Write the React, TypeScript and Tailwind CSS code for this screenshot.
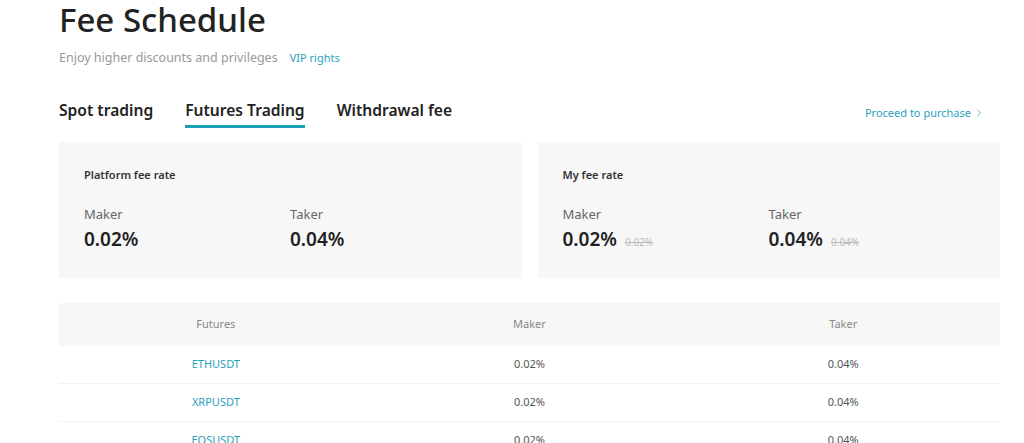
import { ChevronRight } from 'lucide-react';

const rows = [
  { symbol: 'ETHUSDT', maker: '0.02%', taker: '0.04%' },
  { symbol: 'XRPUSDT', maker: '0.02%', taker: '0.04%' },
  { symbol: 'EOSUSDT', maker: '0.02%', taker: '0.04%' },
];

function RateCard({ title, old }: { title: string; old?: boolean }) {
  return (
    <div className="bg-[#f7f7f7] h-[136px] pl-[25px] pt-[26px]">
      <div className="text-[11px] font-semibold text-[#333] leading-[14px]">{title}</div>
      <div className="grid grid-cols-[206px_1fr] mt-[23px]">
        <div>
          <div className="text-[13px] text-[#666] leading-[18px]">Maker</div>
          <div className="flex items-baseline gap-2 mt-[5px]">
            <span className="text-[19px] font-semibold text-[#222] leading-[22px]">0.02%</span>
            {old && <span className="text-[10px] text-[#bbb] line-through">0.02%</span>}
          </div>
        </div>
        <div>
          <div className="text-[13px] text-[#666] leading-[18px]">Taker</div>
          <div className="flex items-baseline gap-2 mt-[5px]">
            <span className="text-[19px] font-semibold text-[#222] leading-[22px]">0.04%</span>
            {old && <span className="text-[10px] text-[#bbb] line-through">0.04%</span>}
          </div>
        </div>
      </div>
    </div>
  );
}

export default function App() {
  return (
    <div className="w-[1024px] h-[443px] overflow-hidden bg-white font-['Noto_Sans',sans-serif]">
      <div className="ml-[59px] w-[941px]">
        <h1 className="text-[33px] font-medium text-[#222] leading-[40px]">Fee Schedule</h1>
        <div className="flex items-center mt-[9px]">
          <span className="text-[12.5px] text-[#999]">Enjoy higher discounts and privileges</span>
          <span className="text-[11px] text-[#2a9fbd] ml-[12px]">VIP rights</span>
        </div>

        <div className="flex items-end justify-between mt-[31px]">
          <div className="flex gap-[32px]">
            <div className="text-[15.6px] font-semibold text-[#222] pb-[6px]">Spot trading</div>
            <div className="text-[15.6px] font-semibold text-[#222] pb-[3px] border-b-[3px] border-[#1e9fb8]">
              Futures Trading
            </div>
            <div className="text-[15.6px] font-semibold text-[#222] pb-[6px]">Withdrawal fee</div>
          </div>
          <div className="flex items-center text-[11px] text-[#2a9fbd] mr-[15px] pb-[7px]">
            Proceed to purchase
            <ChevronRight className="w-3 h-3 ml-[2px]" strokeWidth={1.5} />
          </div>
        </div>

        <div className="grid grid-cols-2 gap-4 mt-[14px]">
          <RateCard title="Platform fee rate" />
          <RateCard title="My fee rate" old />
        </div>

        <div className="mt-[25px]">
          <div className="grid grid-cols-3 bg-[#f7f7f7] h-[43px] items-center text-center text-[11px] text-[#888]">
            <div>Futures</div>
            <div>Maker</div>
            <div>Taker</div>
          </div>
          {rows.map((r) => (
            <div
              key={r.symbol}
              className="grid grid-cols-3 h-[38px] items-center text-center text-[11px] text-[#555] border-b border-[#f2f2f2]"
            >
              <div className="text-[#2a9fbd]">{r.symbol}</div>
              <div>{r.maker}</div>
              <div>{r.taker}</div>
            </div>
          ))}
        </div>
      </div>
    </div>
  );
}
